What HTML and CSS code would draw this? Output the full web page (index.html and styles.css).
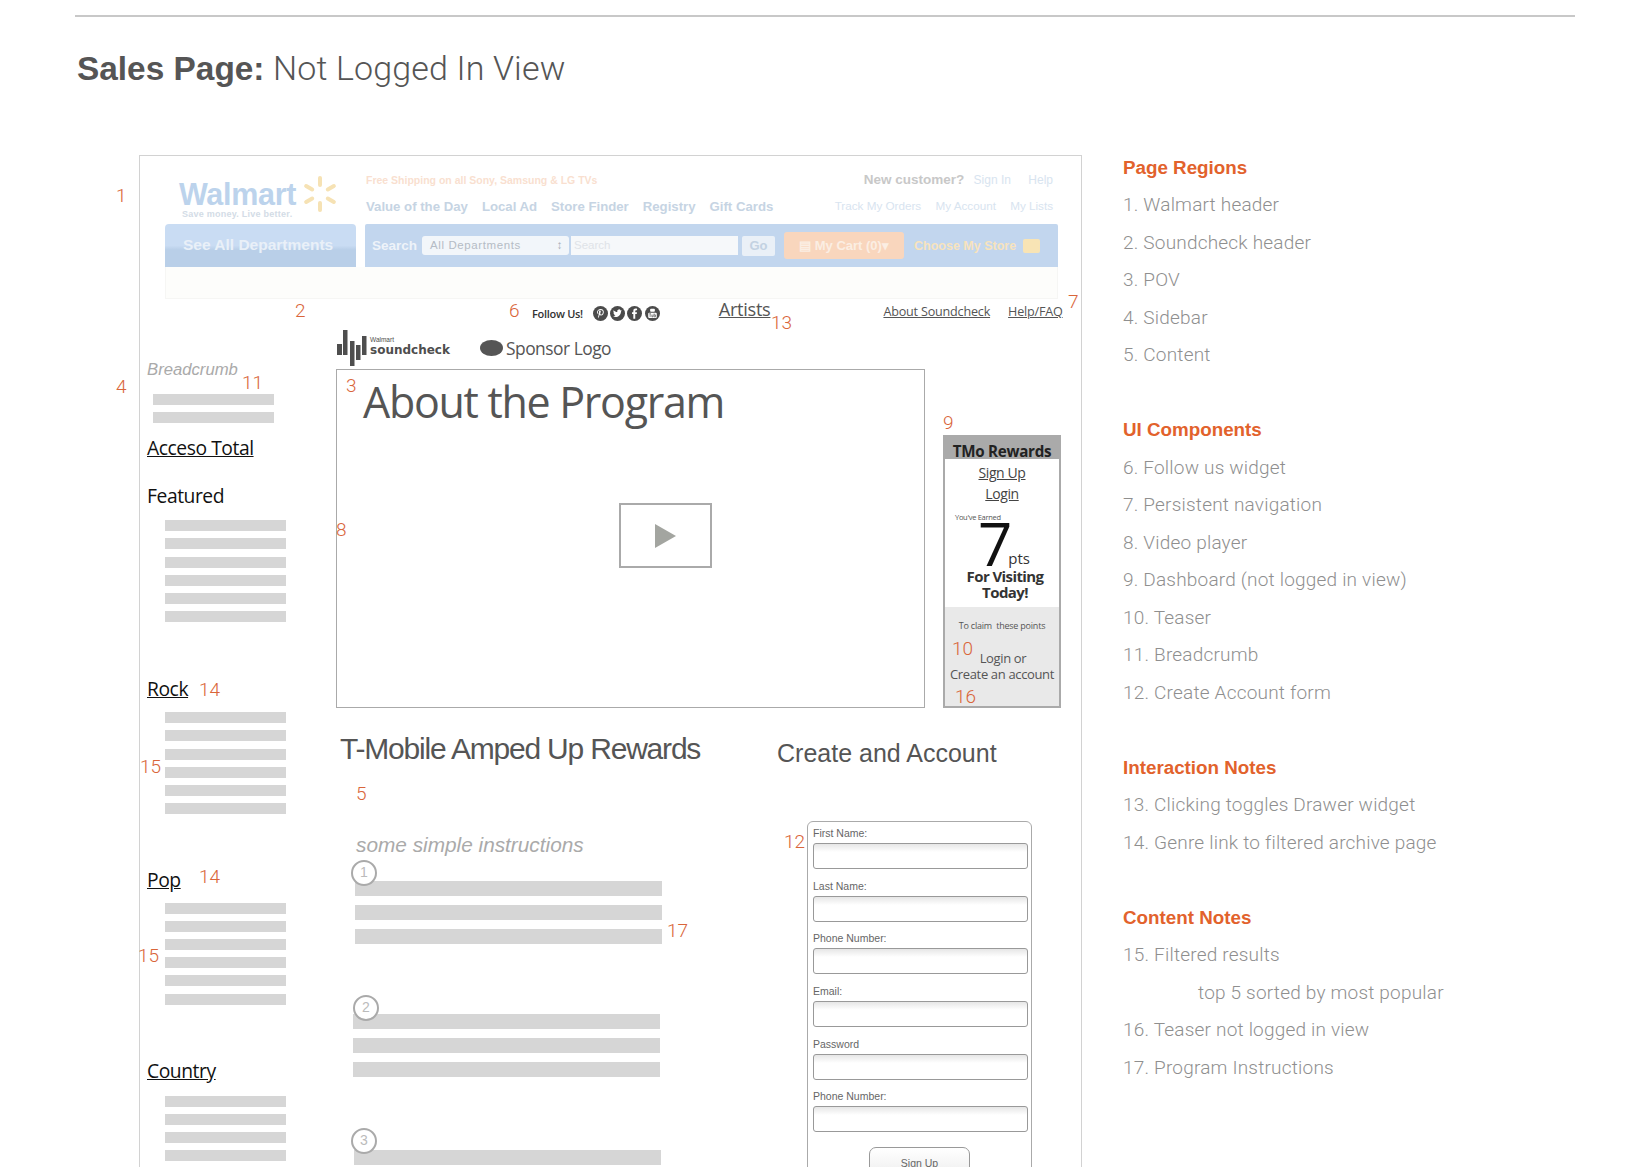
FILE: index.html
```html
<!DOCTYPE html>
<html lang="en">
<head>
    <meta charset="UTF-8">
    <meta name="viewport" content="width=device-width, initial-scale=1.0">
    <title>Sales Page: Not Logged In View</title>
    <link rel="stylesheet" href="styles.css">
</head>
<body>
    <div class="page">
        <div class="top-rule"></div>
        <h1 class="page-title"><strong>Sales Page:</strong> Not Logged In View</h1>

        <div class="layout">
            <div class="wireframe">
                <!-- faded walmart header -->
                <div class="wm-header">
                    <div class="wm-top">
                        <div class="wm-logo">
                            <div class="wm-logo-row">
                                <span class="wm-name">Walmart</span>
                                <svg class="wm-spark" viewBox="-18 -18 36 36">
                                    <g fill="#f6e2b4">
                                        <rect x="-2" y="-18" width="4" height="11" rx="2"/>
                                        <rect x="-2" y="-18" width="4" height="11" rx="2" transform="rotate(60)"/>
                                        <rect x="-2" y="-18" width="4" height="11" rx="2" transform="rotate(120)"/>
                                        <rect x="-2" y="-18" width="4" height="11" rx="2" transform="rotate(180)"/>
                                        <rect x="-2" y="-18" width="4" height="11" rx="2" transform="rotate(240)"/>
                                        <rect x="-2" y="-18" width="4" height="11" rx="2" transform="rotate(300)"/>
                                    </g>
                                </svg>
                            </div>
                            <div class="wm-tagline">Save money. Live better.</div>
                        </div>
                        <div class="wm-links">
                            <div class="wm-links-left">
                                <div class="wm-promo">Free Shipping on all Sony, Samsung &amp; LG TVs</div>
                                <div class="wm-nav">
                                    <span>Value of the Day</span>
                                    <span>Local Ad</span>
                                    <span>Store Finder</span>
                                    <span>Registry</span>
                                    <span>Gift Cards</span>
                                </div>
                            </div>
                            <div class="wm-links-right">
                                <div class="wm-account">
                                    <strong>New customer?</strong>
                                    <span>Sign In</span>
                                    <span>Help</span>
                                </div>
                                <div class="wm-sub">
                                    <span>Track My Orders</span>
                                    <span>My Account</span>
                                    <span>My Lists</span>
                                </div>
                            </div>
                        </div>
                    </div>
                    <div class="wm-bar">
                        <div class="wm-depts">See All Departments</div>
                        <div class="wm-search">
                            <span class="wm-search-label">Search</span>
                            <span class="wm-select">All Departments<span class="wm-arrows">&#8597;</span></span>
                            <span class="wm-input">Search</span>
                            <span class="wm-go">Go</span>
                            <span class="wm-cart">&#9636; My Cart (0)&#9662;</span>
                            <span class="wm-store">Choose My Store</span>
                            <span class="wm-store-icon"></span>
                        </div>
                    </div>
                    <div class="wm-panel"></div>
                </div>

                <!-- soundcheck persistent nav -->
                <div class="sc-nav">
                    <span class="follow-label">Follow Us!</span>
                    <div class="follow-icons">
                        <svg class="social" viewBox="0 0 14 14"><circle cx="7" cy="7" r="7"/><path d="M7.3 2.800c-2.200 0-3.500 1.400-3.500 2.900 0 .9.4 1.600 1 1.900.2-.3.3-.6.2-.8-.3-.4-.4-.7-.4-1.100 0-1.200.9-2 2.500-2 1.300 0 2.100.8 2.100 1.800 0 1.400-.7 2.400-1.600 2.400-.5 0-.9-.4-.8-.9l.5-2c0-.5-.3-.8-.7-.8-.6 0-1 .6-1 1.300 0 .5.1.8.1.8l-.9 3.700-.1 1.600c.5-.5 1-1.500 1.200-2.200l.3-1.200c.2.4.7.6 1.200.6 1.700 0 2.700-1.500 2.700-3.300 0-1.600-1.300-2.700-2.800-2.700z" fill="#fff"/></svg>
                        <svg class="social" viewBox="0 0 14 14"><circle cx="7" cy="7" r="7"/><path d="M11.200 4.400c-.3.1-.6.2-1 .3.4-.2.6-.6.8-1-.3.2-.7.3-1.100.4a1.700 1.700 0 0 0-3 1.600c-1.400-.1-2.700-.8-3.500-1.800-.5.8-.2 1.800.5 2.300-.3 0-.5-.1-.8-.2 0 .8.6 1.500 1.400 1.700-.3.1-.5.1-.8 0 .2.7.8 1.200 1.600 1.200-.7.6-1.600.8-2.500.7 2.800 1.700 7.400.3 7.500-4.700.4-.2.7-.5.9-.8z" fill="#fff"/></svg>
                        <svg class="social" viewBox="0 0 14 14"><circle cx="7" cy="7" r="7"/><path d="M7.700 12V7.500h1.400l.2-1.700H7.700v-1c0-.5.2-.8.8-.8h.9V2.500c-.2 0-.7-.1-1.300-.1-1.300 0-2.200.8-2.200 2.200v1.200H4.700v1.700h1.200V12z" fill="#fff"/></svg>
                        <svg class="social" viewBox="0 0 14 14"><circle cx="7" cy="7" r="7"/><rect x="3" y="6.200" width="8" height="5" rx="1" fill="#fff"/><rect x="4.800" y="2.500" width="4.400" height="2.800" rx=".8" fill="#fff"/><path d="M4 7.200h1.500M4.800 7.200v3M6.400 8v2.100h1.100V8M8.500 7v3.100h1.300V8.300H8.500" stroke="#4b4b4b" stroke-width=".6" fill="none"/></svg>
                    </div>
                    <a class="nav-artists">Artists</a>
                    <a class="nav-link nav-about">About Soundcheck</a>
                    <a class="nav-link nav-help">Help/FAQ</a>
                </div>

                <div class="wf-body">
                    <aside class="sidebar">
                        <div class="breadcrumb">Breadcrumb</div>
                        <div class="bars crumb-bars">
                            <div class="bar"></div>
                            <div class="bar"></div>
                        </div>
                        <a class="side-link side-acceso">Acceso Total</a>
                        <div class="side-title">Featured</div>
                        <div class="bars side-bars">
                            <div class="bar"></div><div class="bar"></div><div class="bar"></div>
                            <div class="bar"></div><div class="bar"></div><div class="bar"></div>
                        </div>
                        <a class="side-link side-rock">Rock</a>
                        <div class="bars side-bars">
                            <div class="bar"></div><div class="bar"></div><div class="bar"></div>
                            <div class="bar"></div><div class="bar"></div><div class="bar"></div>
                        </div>
                        <a class="side-link side-pop">Pop</a>
                        <div class="bars side-bars">
                            <div class="bar"></div><div class="bar"></div><div class="bar"></div>
                            <div class="bar"></div><div class="bar"></div><div class="bar"></div>
                        </div>
                        <a class="side-link side-country">Country</a>
                        <div class="bars side-bars">
                            <div class="bar"></div><div class="bar"></div>
                            <div class="bar"></div><div class="bar"></div>
                        </div>
                    </aside>

                    <main class="content">
                        <div class="brand-row">
                            <svg class="sc-mark" viewBox="0 0 30 37">
                                <g fill="#4e4e4e">
                                    <rect x="0" y="15" width="5" height="11"/>
                                    <rect x="6" y="1" width="4.500" height="25"/>
                                    <rect x="13" y="12" width="4.500" height="25"/>
                                    <rect x="19" y="16" width="4.500" height="15"/>
                                    <rect x="25" y="7" width="4.500" height="19"/>
                                </g>
                            </svg>
                            <div class="sc-word">
                                <span class="sc-walmart">Walmart</span>
                                <span class="sc-name">soundcheck</span>
                            </div>
                            <span class="sponsor-dot"></span>
                            <span class="sponsor-name">Sponsor Logo</span>
                        </div>

                        <div class="hero-row">
                            <div class="video">
                                <h2 class="video-title">About the Program</h2>
                                <div class="play-box"><span class="play-arrow"></span></div>
                            </div>
                            <div class="rewards">
                                <div class="rewards-head">TMo Rewards</div>
                                <div class="rewards-body">
                                    <a class="rewards-link">Sign Up</a>
                                    <a class="rewards-link">Login</a>
                                    <div class="earned">You've Earned</div>
                                    <div class="points"><span class="points-num">7</span><span class="points-unit">pts</span></div>
                                    <div class="visiting">For Visiting<br>Today!</div>
                                </div>
                                <div class="rewards-teaser">
                                    <div class="claim">To claim &nbsp;these points</div>
                                    <div class="teaser-login">Login or</div>
                                    <div class="teaser-create">Create an account</div>
                                </div>
                            </div>
                        </div>

                        <div class="lower">
                            <section class="program">
                                <h2 class="program-title">T-Mobile Amped Up Rewards</h2>
                                <div class="instructions">some simple instructions</div>
                                <div class="step step-a">
                                    <div class="step-num">1</div>
                                    <div class="step-bar"></div><div class="step-bar"></div><div class="step-bar"></div>
                                </div>
                                <div class="step step-b">
                                    <div class="step-num">2</div>
                                    <div class="step-bar"></div><div class="step-bar"></div><div class="step-bar"></div>
                                </div>
                                <div class="step step-c">
                                    <div class="step-num">3</div>
                                    <div class="step-bar"></div>
                                </div>
                            </section>
                            <section class="account">
                                <h2 class="account-title">Create and Account</h2>
                                <form class="signup">
                                    <div class="field"><label>First Name:</label><div class="fake-input"></div></div>
                                    <div class="field"><label>Last Name:</label><div class="fake-input"></div></div>
                                    <div class="field"><label>Phone Number:</label><div class="fake-input"></div></div>
                                    <div class="field"><label>Email:</label><div class="fake-input"></div></div>
                                    <div class="field"><label>Password</label><div class="fake-input"></div></div>
                                    <div class="field"><label>Phone Number:</label><div class="fake-input"></div></div>
                                    <div class="signup-btn">Sign Up</div>
                                </form>
                            </section>
                        </div>
                    </main>
                </div>

                <!-- callout numbers on top of the wireframe -->
                <span class="callout c-1">1</span>
                <span class="callout c-2">2</span>
                <span class="callout c-3">3</span>
                <span class="callout c-4">4</span>
                <span class="callout c-5">5</span>
                <span class="callout c-6">6</span>
                <span class="callout c-7">7</span>
                <span class="callout c-8">8</span>
                <span class="callout c-9">9</span>
                <span class="callout c-10">10</span>
                <span class="callout c-11">11</span>
                <span class="callout c-12">12</span>
                <span class="callout c-13">13</span>
                <span class="callout c-14a">14</span>
                <span class="callout c-14b">14</span>
                <span class="callout c-15a">15</span>
                <span class="callout c-15b">15</span>
                <span class="callout c-16">16</span>
                <span class="callout c-17">17</span>
            </div>

            <div class="notes">
                <section class="note-group">
                    <h3>Page Regions</h3>
                    <p>1. Walmart header</p>
                    <p>2. Soundcheck header</p>
                    <p>3. POV</p>
                    <p>4. Sidebar</p>
                    <p>5. Content</p>
                </section>
                <section class="note-group">
                    <h3>UI Components</h3>
                    <p>6. Follow us widget</p>
                    <p>7. Persistent navigation</p>
                    <p>8. Video player</p>
                    <p>9. Dashboard (not logged in view)</p>
                    <p>10. Teaser</p>
                    <p>11. Breadcrumb</p>
                    <p>12. Create Account form</p>
                </section>
                <section class="note-group">
                    <h3>Interaction Notes</h3>
                    <p>13. Clicking toggles Drawer widget</p>
                    <p>14. Genre link to filtered archive page</p>
                </section>
                <section class="note-group">
                    <h3>Content Notes</h3>
                    <p>15. Filtered results</p>
                    <p class="note-indent">top 5 sorted by most popular</p>
                    <p>16. Teaser not logged in view</p>
                    <p>17. Program Instructions</p>
                </section>
            </div>
        </div>
    </div>
</body>
</html>
```

FILE: styles.css
```css
body {
    margin: 0;
    background: #fff;
    font-family: "Liberation Sans", Arial, sans-serif;
    color: #555;
}
.page {
    width: 1650px;
    height: 1167px;
    overflow: hidden;
}
.top-rule {
    height: 2px;
    margin: 15px 75px 0;
    background: #c8c8c8;
}
.page-title {
    margin: 29px 0 0 77px;
    height: 44px;
    font-family: Roboto, "Liberation Sans", sans-serif;
    font-size: 34px;
    line-height: 44px;
    font-weight: 300;
    letter-spacing: 0.15px;
    color: #555;
}
.page-title strong {
    font-family: "Liberation Sans", Arial, sans-serif;
    font-weight: bold;
    font-size: 33.4px;
    letter-spacing: 0;
}
.layout {
    display: flex;
    margin: 65px 0 0 139px;
}

/* wireframe */
.wireframe {
    position: relative;
    box-sizing: border-box;
    width: 943px;
    height: 1012px;
    border: 1px solid #d2d2d2;
    border-bottom: none;
    flex: none;
}
.wm-header {
    width: 893px;
    margin-left: 25px;
}
.wm-top {
    display: flex;
    height: 68px;
}
.wm-logo {
    width: 201px;
    padding-left: 14px;
    box-sizing: border-box;
}
.wm-logo-row {
    display: flex;
    align-items: center;
    height: 52px;
    padding-top: 25px;
    box-sizing: border-box;
}
.wm-name {
    font-size: 30.5px;
    font-weight: bold;
    letter-spacing: -0.3px;
    color: #bcd3ec;
}
.wm-spark {
    width: 36px;
    height: 36px;
    margin-left: 6px;
    margin-top: -2px;
}
.wm-tagline {
    margin: 1px 0 0 3px;
    font-size: 9px;
    font-weight: bold;
    letter-spacing: 0.25px;
    color: #d3dce6;
}
.wm-links {
    flex: 1;
    display: flex;
    justify-content: space-between;
}
.wm-promo {
    margin-top: 18px;
    font-size: 10.5px;
    font-weight: bold;
    line-height: 12px;
    color: #f9dfd0;
}
.wm-nav {
    display: flex;
    gap: 14px;
    margin-top: 13px;
    font-size: 13.2px;
    line-height: 16px;
    font-weight: bold;
    color: #c6d4e3;
}
.wm-links-right {
    text-align: right;
    padding-right: 5px;
}
.wm-account {
    margin-top: 17px;
    font-size: 12px;
    line-height: 14px;
    color: #d8e4f0;
}
.wm-account strong {
    margin-right: 6px;
    font-size: 13.5px;
    color: #c8c8c8;
}
.wm-account span + span {
    margin-left: 14px;
}
.wm-sub {
    margin-top: 12px;
    font-size: 11.7px;
    line-height: 14px;
    color: #d8e4f0;
}
.wm-sub span + span {
    margin-left: 11px;
}
.wm-bar {
    display: flex;
    height: 43px;
    gap: 9px;
}
.wm-depts {
    width: 191px;
    box-sizing: border-box;
    padding: 12px 0 0 18px;
    border-radius: 4px 4px 0 0;
    background: linear-gradient(#c9dcf3 0, #c9dcf3 50%, #b9cfe8 60%, #b9cfe8 100%);
    font-size: 15.5px;
    line-height: 18px;
    font-weight: bold;
    color: #e9f0f8;
}
.wm-search {
    flex: 1;
    display: flex;
    align-items: center;
    padding-left: 7px;
    background: #c2d6ee;
    border-radius: 2px 2px 0 0;
    font-weight: bold;
    color: #eef3f9;
}
.wm-search-label {
    width: 50px;
    font-size: 13.5px;
}
.wm-select {
    display: flex;
    justify-content: space-between;
    width: 147px;
    height: 19px;
    padding: 0 6px 0 8px;
    box-sizing: border-box;
    border-radius: 3px;
    background: #f2f6fa;
    font-size: 11.5px;
    line-height: 19px;
    font-weight: normal;
    letter-spacing: 0.6px;
    color: #b5bcc5;
}
.wm-arrows {
    color: #a5acb5;
}
.wm-input {
    width: 167px;
    height: 19px;
    margin-left: 2px;
    padding-left: 3px;
    box-sizing: border-box;
    background: #f6f8fa;
    font-size: 11.5px;
    line-height: 19px;
    font-weight: normal;
    color: #dfe3e8;
}
.wm-go {
    width: 33px;
    height: 20px;
    margin-left: 4px;
    border-radius: 2px;
    background: #eaf0f7;
    font-size: 13px;
    line-height: 20px;
    text-align: center;
    color: #c3d2e2;
}
.wm-cart {
    width: 120px;
    height: 27px;
    margin-left: 9px;
    border-radius: 3px;
    background: #f9d6bd;
    font-size: 13px;
    line-height: 27px;
    text-align: center;
    color: #fbeee3;
}
.wm-store {
    width: 109px;
    margin-left: 10px;
    font-size: 12.5px;
    color: #f7e3bd;
}
.wm-store-icon {
    width: 17px;
    height: 14px;
    border-radius: 2px;
    background: #f8e4b5;
}
.wm-panel {
    height: 31px;
    border: 1px solid #f6f6f4;
    border-top: none;
    background: #fdfdfb;
}
.sc-nav {
    display: flex;
    align-items: center;
    height: 28px;
    font-family: "Open Sans", sans-serif;
}
.follow-label {
    margin-left: 392px;
    font-size: 11px;
    font-weight: 600;
    letter-spacing: -0.3px;
    color: #333;
}
.follow-icons {
    display: flex;
    gap: 2.3px;
    margin-left: 10px;
}
.social {
    width: 15px;
    height: 15px;
    fill: #4b4b4b;
}
.nav-artists {
    margin: -9px 0 0 59px;
    font-size: 18.2px;
    letter-spacing: -0.3px;
    text-decoration: underline;
    color: #555;
}
.nav-link {
    margin-top: -4px;
    font-size: 12.6px;
    letter-spacing: -0.2px;
    text-decoration: underline;
    color: #555;
}
.nav-about {
    margin-left: 113px;
}
.nav-help {
    margin-left: 18px;
}
.wf-body {
    display: flex;
    padding-top: 2px;
}

/* sidebar */
.sidebar {
    width: 196px;
    flex: none;
    padding-left: 8px;
    box-sizing: border-box;
}
.breadcrumb {
    margin: 30px 0 0 -1px;
    font-size: 16.7px;
    line-height: 22px;
    font-style: italic;
    color: #aaa;
}
.bars {
    display: flex;
    flex-direction: column;
    width: 121px;
    gap: 7.2px;
}
.bar {
    height: 11px;
    background: #d6d6d6;
}
.crumb-bars {
    margin: 13px 0 0 5px;
}
.side-bars {
    margin-left: 17px;
}
.side-link,
.side-title {
    display: block;
    width: fit-content;
    margin-left: -1px;
    font-family: "Open Sans", sans-serif;
    font-size: 19.3px;
    line-height: 26px;
    letter-spacing: -0.45px;
    color: #111;
}
.side-link {
    text-decoration: underline;
}
.side-acceso {
    margin-top: 12px;
}
.side-title {
    margin-top: 22px;
    margin-bottom: 11px;
}
.side-rock {
    margin-top: 54px;
    margin-bottom: 10px;
}
.side-pop {
    margin-top: 52.5px;
    margin-bottom: 10px;
}
.side-country {
    margin-top: 53px;
    margin-bottom: 12px;
}

/* main column */
.content {
    flex: 1;
    min-width: 0;
}
.brand-row {
    display: flex;
    align-items: center;
    height: 40px;
    padding-left: 1px;
    box-sizing: border-box;
    font-family: "Open Sans", sans-serif;
}
.sc-mark {
    width: 30px;
    height: 37px;
    margin-top: -3px;
}
.sc-word {
    display: flex;
    flex-direction: column;
    margin-left: 3px;
    margin-top: -5px;
    color: #4e4e4e;
}
.sc-walmart {
    font-family: "Liberation Sans", sans-serif;
    font-size: 6.5px;
    line-height: 7px;
}
.sc-name {
    font-family: "DejaVu Sans", sans-serif;
    font-size: 12px;
    line-height: 15px;
    font-weight: bold;
}
.sponsor-dot {
    width: 23px;
    height: 16px;
    margin: -3px 0 0 30px;
    border-radius: 50%;
    background: #555;
}
.sponsor-name {
    margin: -3px 0 0 3px;
    font-size: 17.4px;
    letter-spacing: -0.5px;
    color: #555;
}
.hero-row {
    display: flex;
    align-items: flex-end;
    height: 339px;
}
.video {
    position: relative;
    width: 589px;
    height: 339px;
    box-sizing: border-box;
    border: 1px solid #aaa;
}
.video-title {
    margin: 5px 0 0 26px;
    font-family: "Open Sans", sans-serif;
    font-size: 43px;
    line-height: 54px;
    font-weight: 400;
    letter-spacing: -1.3px;
    color: #555;
}
.play-box {
    display: flex;
    align-items: center;
    justify-content: center;
    width: 93px;
    height: 65px;
    box-sizing: border-box;
    margin: 74px 0 0 282px;
    border: 2px solid #aaa;
}
.play-arrow {
    width: 0;
    height: 0;
    border-style: solid;
    border-width: 12px 0 12px 21px;
    border-color: transparent transparent transparent #a3a5a0;
}
.rewards {
    display: flex;
    flex-direction: column;
    box-sizing: border-box;
    width: 118px;
    height: 273px;
    margin-left: 18px;
    border: 2px solid #aaa;
    border-top: none;
    font-family: "Open Sans", sans-serif;
    text-align: center;
}
.rewards-head {
    height: 24px;
    margin: 0 -2px;
    background: #aaa;
    font-size: 15.2px;
    line-height: 32px;
    font-weight: 700;
    letter-spacing: -0.3px;
    color: #222;
}
.rewards-body {
    height: 148px;
}
.rewards-link {
    display: block;
    font-size: 14px;
    line-height: 21px;
    letter-spacing: -0.4px;
    text-decoration: underline;
    color: #444;
}
.rewards-link:first-child {
    margin-top: 3px;
}
.earned {
    margin: 9px 0 0 10px;
    font-size: 7.5px;
    line-height: 9px;
    text-align: left;
    letter-spacing: -0.3px;
    color: #555;
}
.points {
    display: flex;
    align-items: flex-end;
    height: 42px;
    margin-top: 3.5px;
    padding-left: 33px;
    color: #111;
}
.points-num {
    font-size: 60px;
    line-height: 36px;
    margin-bottom: 7px;
}
.points-unit {
    margin: 0 0 0 -4px;
    font-size: 15px;
    line-height: 20px;
    color: #333;
}
.visiting {
    padding-left: 6px;
    font-size: 15px;
    line-height: 16px;
    font-weight: 700;
    letter-spacing: -0.6px;
    color: #333;
}
.rewards-teaser {
    flex: 1;
    background: #e9e9e9;
    color: #555;
}
.claim {
    margin-top: 13px;
    font-size: 9px;
    line-height: 12px;
    letter-spacing: -0.22px;
}
.teaser-login {
    margin: 17.5px 0 0 2px;
    font-size: 13px;
    line-height: 16.5px;
    letter-spacing: -0.35px;
}
.teaser-create {
    font-size: 13px;
    line-height: 16.5px;
    letter-spacing: -0.35px;
    white-space: nowrap;
}
.lower {
    display: flex;
}
.program {
    width: 442px;
    flex: none;
}
.program-title {
    margin: 21px 0 0 4px;
    font-size: 30px;
    line-height: 40px;
    font-weight: 400;
    letter-spacing: -1.2px;
    color: #555;
    white-space: nowrap;
}
.instructions {
    margin: 64px 0 0 20px;
    font-size: 20.8px;
    line-height: 24px;
    font-style: italic;
    color: #aaa;
}
.step {
    width: 307px;
}
.step-bar {
    height: 15px;
    margin-bottom: 9px;
    background: #d6d6d6;
}
.step-num {
    position: relative;
    width: 26px;
    height: 26px;
    box-sizing: border-box;
    border: 2px solid #aaa;
    border-radius: 50%;
    background: #fff;
    font-size: 14px;
    line-height: 21px;
    text-align: center;
    color: #bbb;
}
.step-a {
    margin: 3px 0 0 19px;
}
.step-a .step-num {
    margin: 0 0 -5px -4px;
}
.step-b {
    margin: 51px 0 0 17px;
}
.step-b .step-num {
    margin: 0 0 -7px 0;
}
.step-c {
    margin: 51px 0 0 18px;
}
.step-c .step-num {
    margin: 0 0 -4px -3px;
}
.account-title {
    margin: 25px 0 0 -1px;
    font-size: 25px;
    line-height: 40px;
    font-weight: 400;
    color: #555;
    white-space: nowrap;
}
.signup {
    box-sizing: border-box;
    width: 225px;
    height: 400px;
    margin: 48px 0 0 29px;
    padding: 3px 3px 0 5px;
    border: 1px solid #aaa;
    border-radius: 6px;
}
.field {
    height: 52.7px;
}
.field label {
    display: block;
    height: 18px;
    font-size: 10.5px;
    line-height: 17px;
    color: #666;
}
.fake-input {
    box-sizing: border-box;
    height: 26px;
    border: 1px solid #999;
    border-radius: 3px;
    background: linear-gradient(#e6e6e6 0, #fff 8px);
}
.signup-btn {
    box-sizing: border-box;
    width: 101px;
    height: 40px;
    margin: 6px 0 0 56px;
    padding-top: 9px;
    border: 1px solid #999;
    border-radius: 7px;
    background: linear-gradient(#fff, #e8e8e8);
    font-size: 10.5px;
    line-height: 12px;
    text-align: center;
    color: #666;
}

/* callout numbers, offsets are from the wireframe corner */
.callout {
    position: absolute;
    font-family: Roboto, "Liberation Sans", sans-serif;
    font-weight: 300;
    font-size: 19px;
    line-height: 14px;
    color: #d9653a;
}
.c-1 { left: -24px; top: 33px; }
.c-2 { left: 155px; top: 148px; }
.c-3 { left: 206px; top: 223px; }
.c-4 { left: -24px; top: 224px; }
.c-5 { left: 216px; top: 631px; }
.c-6 { left: 369px; top: 148px; }
.c-7 { left: 928px; top: 139px; }
.c-8 { left: 196px; top: 367px; }
.c-9 { left: 803px; top: 260px; }
.c-10 { left: 812px; top: 486px; }
.c-11 { left: 102px; top: 220px; }
.c-12 { left: 644px; top: 679px; }
.c-13 { left: 631px; top: 160px; }
.c-14a { left: 59px; top: 527px; }
.c-14b { left: 59px; top: 714px; }
.c-15a { left: 0; top: 604px; }
.c-15b { left: -2px; top: 793px; }
.c-16 { left: 815px; top: 534px; }
.c-17 { left: 527px; top: 768px; }

/* notes column */
.notes {
    margin: -6.5px 0 0 41px;
    font-family: Roboto, "Liberation Sans", sans-serif;
}
.note-group {
    margin-bottom: 37.5px;
}
.note-group h3 {
    margin: 0;
    padding-top: 1px;
    font-family: "Liberation Sans", Arial, sans-serif;
    font-size: 18.8px;
    line-height: 36.5px;
    font-weight: bold;
    color: #e2622c;
}
.note-group p {
    margin: 0;
    font-size: 19px;
    line-height: 37.5px;
    font-weight: 300;
    letter-spacing: 0.2px;
    color: #8f8f8f;
}
.note-group .note-indent {
    margin-left: 75px;
}
```
